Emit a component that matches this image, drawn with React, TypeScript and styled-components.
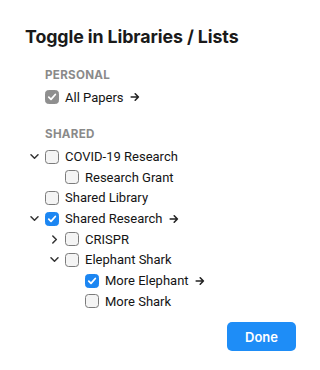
import React from "react";
import styled, { createGlobalStyle } from "styled-components";

const GlobalStyle = createGlobalStyle`
  body {
    margin: 0;
    background: #ffffff;
    font-family: Roboto, Inter, "Liberation Sans", sans-serif;
    -webkit-font-smoothing: antialiased;
  }
`;

const Dialog = styled.div`
  width: 320px;
  height: 370px;
  box-sizing: border-box;
  padding: 27px 24px 0 25px;
  display: flex;
  flex-direction: column;
`;

const Title = styled.h1`
  margin: 0;
  font-family: Inter, "Liberation Sans", sans-serif;
  font-size: 17.8px;
  line-height: 20px;
  font-weight: 700;
  color: #1a1a1a;
  letter-spacing: -0.1px;
`;

const Section = styled.div<{ $top: number }>`
  margin-top: ${(p) => p.$top}px;
  display: flex;
  flex-direction: column;
`;

const SectionLabel = styled.div`
  padding-left: 20px;
  font-family: Inter, "Liberation Sans", sans-serif;
  font-size: 11.6px;
  line-height: 13px;
  font-weight: 700;
  color: #8a8a8a;
  letter-spacing: 0.3px;
  margin-bottom: 5px;
`;

const Row = styled.div<{ $level: number }>`
  height: 20.7px;
  display: flex;
  align-items: center;
  padding-left: ${(p) => p.$level * 20}px;
  font-size: 13px;
  color: #141414;
`;

const ChevronSlot = styled.span`
  width: 20px;
  display: flex;
  align-items: center;
  justify-content: flex-start;
  padding-left: 5px;
  box-sizing: border-box;
  color: #333;
`;

const Box = styled.span<{ $state: "off" | "on" | "locked" }>`
  width: 14px;
  height: 14px;
  box-sizing: border-box;
  border-radius: 3.5px;
  display: inline-flex;
  align-items: center;
  justify-content: center;
  flex-shrink: 0;
  border: 1px solid
    ${(p) =>
      p.$state === "on" ? "#1c86f2" : p.$state === "locked" ? "#8f8f8f" : "#7b7b7b"};
  background: ${(p) =>
    p.$state === "on" ? "#1c86f2" : p.$state === "locked" ? "#8f8f8f" : "#f4f4f4"};
`;

const Label = styled.span`
  margin-left: 6px;
  white-space: nowrap;
`;

const Arrow = styled.svg`
  margin-left: 6px;
  color: #222;
`;

const Footer = styled.div`
  display: flex;
  justify-content: flex-end;
  margin-top: 10.5px;
`;

const DoneButton = styled.button`
  width: 69px;
  height: 29px;
  border: none;
  border-radius: 5px;
  background: #1e8df7;
  color: #ffffff;
  font-family: Inter, "Liberation Sans", sans-serif;
  font-size: 13px;
  font-weight: 600;
  cursor: pointer;
`;

type Node = {
  label: string;
  level: number;
  state: "off" | "on" | "locked";
  chevron?: "down" | "right";
  arrow?: boolean;
};

const shared: Node[] = [
  { label: "COVID-19 Research", level: 0, state: "off", chevron: "down" },
  { label: "Research Grant", level: 1, state: "off" },
  { label: "Shared Library", level: 0, state: "off" },
  { label: "Shared Research", level: 0, state: "on", chevron: "down", arrow: true },
  { label: "CRISPR", level: 1, state: "off", chevron: "right" },
  { label: "Elephant Shark", level: 1, state: "off", chevron: "down" },
  { label: "More Elephant", level: 2, state: "on", arrow: true },
  { label: "More Shark", level: 2, state: "off" },
];

const Chevron = ({ dir }: { dir: "down" | "right" }) => (
  <svg width="9" height="9" viewBox="0 0 9 9" fill="none">
    <path
      d={dir === "down" ? "M1 2.8 L4.5 6.3 L8 2.8" : "M2.8 1 L6.3 4.5 L2.8 8"}
      stroke="currentColor"
      strokeWidth="1.5"
      strokeLinecap="round"
      strokeLinejoin="round"
    />
  </svg>
);

const Check = () => (
  <svg width="10" height="10" viewBox="0 0 10 10" fill="none">
    <path
      d="M1.8 5.2 L4 7.3 L8.3 2.5"
      stroke="#ffffff"
      strokeWidth="1.8"
      strokeLinecap="round"
      strokeLinejoin="round"
    />
  </svg>
);

const GoArrow = () => (
  <Arrow width="10" height="10" viewBox="0 0 10 10" fill="none">
    <path
      d="M1.2 5 H8.4 M5.2 1.8 L8.4 5 L5.2 8.2"
      stroke="currentColor"
      strokeWidth="1.6"
      strokeLinecap="round"
      strokeLinejoin="round"
    />
  </Arrow>
);

const TreeRow = ({ node }: { node: Node }) => (
  <Row $level={node.level}>
    <ChevronSlot>{node.chevron && <Chevron dir={node.chevron} />}</ChevronSlot>
    <Box $state={node.state}>{node.state !== "off" && <Check />}</Box>
    <Label>{node.label}</Label>
    {node.arrow && <GoArrow />}
  </Row>
);

const App = () => (
  <>
    <GlobalStyle />
    <Dialog>
      <Title>Toggle in Libraries / Lists</Title>
      <Section $top={22}>
        <SectionLabel>PERSONAL</SectionLabel>
        <TreeRow node={{ label: "All Papers", level: 0, state: "locked", arrow: true }} />
      </Section>
      <Section $top={20.5}>
        <SectionLabel>SHARED</SectionLabel>
        {shared.map((n) => (
          <TreeRow key={n.label} node={n} />
        ))}
      </Section>
      <Footer>
        <DoneButton>Done</DoneButton>
      </Footer>
    </Dialog>
  </>
);

export default App;
